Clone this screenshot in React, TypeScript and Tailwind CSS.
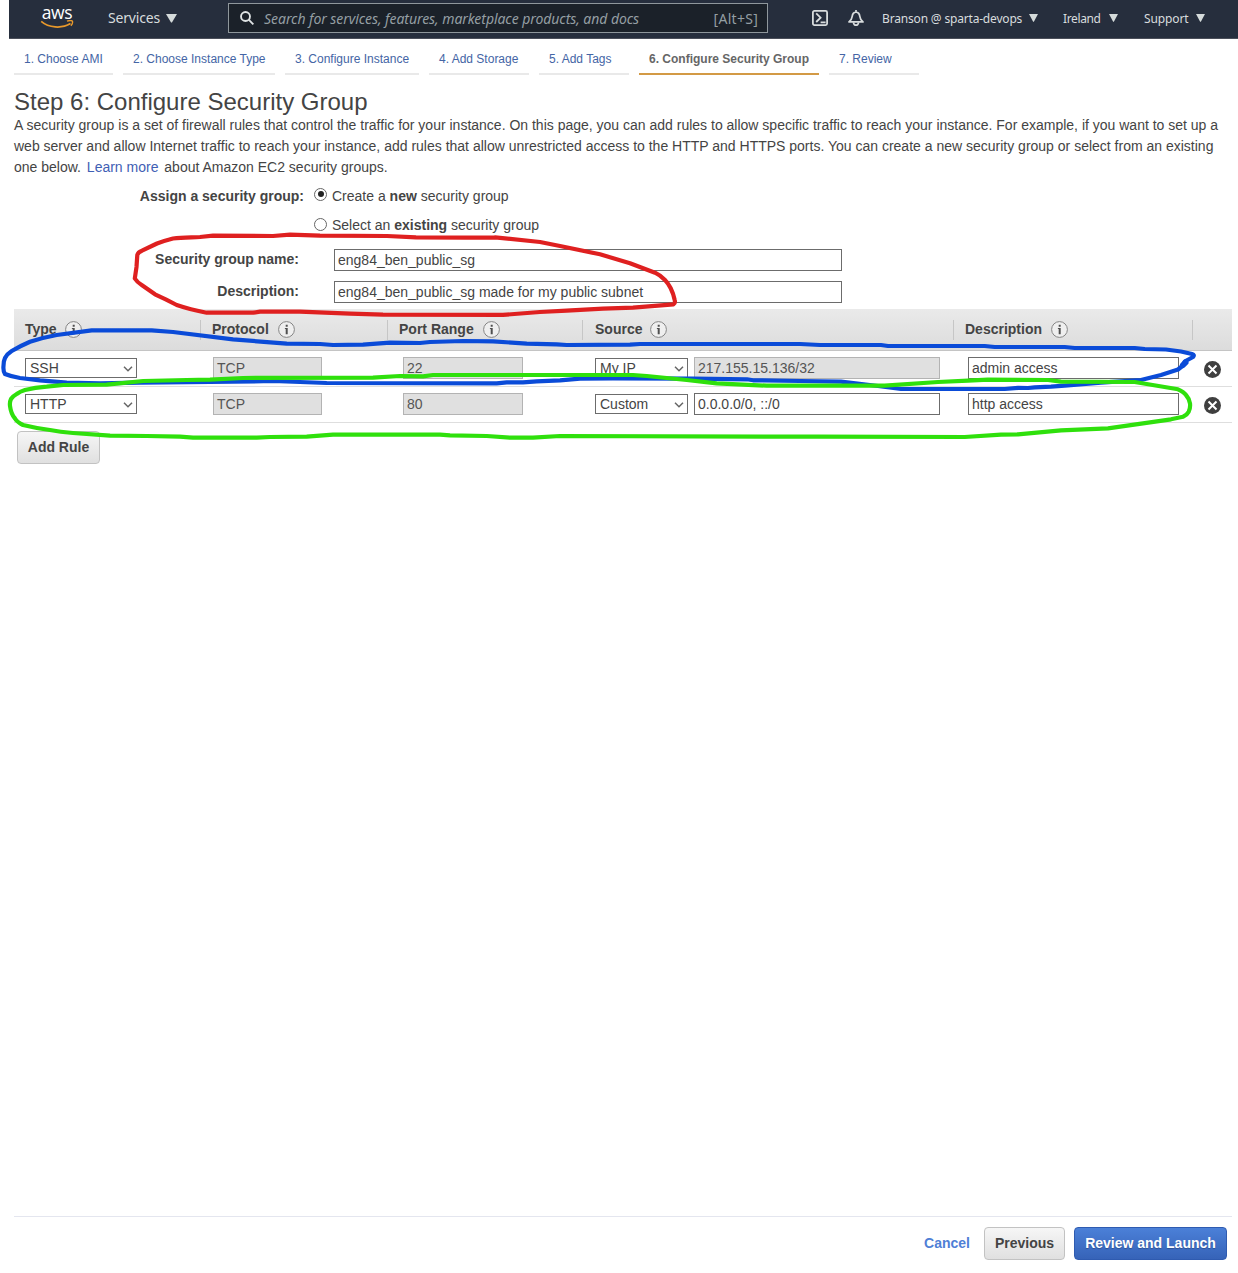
import React from "react";

const ARIAL = "font-['Liberation_Sans',Arial,sans-serif]";
const COLS = "grid grid-cols-[187px_187px_195px_371px_239px_39px]";

function Caret({ className }: { className: string }) {
  return (
    <svg viewBox="0 0 10 9" className={className} preserveAspectRatio="none" fill="#d5dbdb">
      <path d="M0 0h10L5.4 8.6h-.8z" />
    </svg>
  );
}

function TopBar() {
  return (
    <header className="ml-[9px] flex h-[39px] items-start border-b border-[#4b4f5a] bg-[#262e3d] font-['Noto_Sans',sans-serif] text-[#d8dcdd]">
      <div className="ml-[31px] flex h-[38px] w-[34px] flex-col items-center pt-[4px]">
        <span className="h-[16px] font-['Open_Sans',sans-serif] text-[17.5px] leading-[16px] font-medium tracking-[-0.4px] text-white">aws</span>
        <svg viewBox="0 0 34 9" className="h-[9px] w-[34px]" fill="none" stroke="#e8992b">
          <path d="M1.200 1.400C8.500 7.800 21.500 9 30.500 3.600" strokeWidth="1.700" />
          <path d="M27 1.200c2-.8 5-.8 5.400 0 .4 1-.2 3-1.500 4.600" strokeWidth="1.400" />
        </svg>
      </div>
      <span className="ml-[34px] h-[36px] text-[14px] leading-[36px] tracking-[-0.17px]">Services</span>
      <Caret className="mt-[14px] ml-[6px] h-[9px] w-[11px]" />
      <div className="mt-[3px] ml-[51px] flex h-[30px] w-[540px] items-center border border-[#8f979c] bg-[#1b2129] pr-[9px] pl-[11px] text-[14px] text-[#949ea3]">
        <svg viewBox="0 0 15 15" className="h-[14px] w-[14px]" fill="none" stroke="#dfe3e4" strokeWidth="2">
          <circle cx="5.900" cy="5.900" r="4.800" />
          <path d="M9.300 9.300l5 5" />
        </svg>
        <span className="ml-[10px] tracking-[-0.06px] italic">Search for services, features, marketplace products, and docs</span>
        <span className="ml-auto tracking-[0.28px]">[Alt+S]</span>
      </div>
      <svg viewBox="0 0 16 16" className="mt-[10px] ml-[44px] h-[16px] w-[16px]" fill="none" stroke="#d8dcdd" strokeWidth="1.800">
        <rect x="0.900" y="0.900" width="14.200" height="14.200" rx="1.500" />
        <path d="M4.200 3.400l4.400 4.300-4.400 4.300M8.600 12.300h5" />
      </svg>
      <svg viewBox="0 0 16 17" className="mt-[10px] ml-[20px] h-[17px] w-[16px]" fill="none" stroke="#d8dcdd" strokeWidth="1.700" strokeLinejoin="round">
        <path d="M8 0v2M8 1.800C5.400 2.400 4.400 4.200 4.200 6.400 4 8.800 3 10.200 1 11.900h14C13 10.200 12 8.800 11.800 6.400 11.600 4.200 10.600 2.400 8 1.800z" />
        <path d="M5.400 12.300c.3 1.900 1.300 2.900 2.600 2.900s2.300-1 2.600-2.900" />
      </svg>
      <span className="ml-[18px] w-[140px] text-[12px] leading-[37px] tracking-[-0.18px] whitespace-nowrap">Branson @ sparta-devops</span>
      <Caret className="mt-[14px] ml-[7px] h-[8px] w-[9px]" />
      <span className="ml-[25px] w-[38px] text-[12px] leading-[37px] tracking-[-0.38px]">Ireland</span>
      <Caret className="mt-[14px] ml-[8px] h-[8px] w-[9px]" />
      <span className="ml-[26px] w-[45px] text-[12px] leading-[37px] tracking-[-0.12px]">Support</span>
      <Caret className="mt-[14px] ml-[7px] h-[8px] w-[9px]" />
    </header>
  );
}

const steps = [
  { label: "1. Choose AMI", width: "w-[99px]" },
  { label: "2. Choose Instance Type", width: "w-[152px]" },
  { label: "3. Configure Instance", width: "w-[134px]" },
  { label: "4. Add Storage", width: "w-[100px]" },
  { label: "5. Add Tags", width: "w-[90px]" },
  { label: "6. Configure Security Group", width: "w-[180px]", active: true },
  { label: "7. Review", width: "w-[90px]" },
];

function Steps() {
  return (
    <nav className="flex gap-[10px] px-[14px] text-[12px]">
      {steps.map((s) => (
        <a
          key={s.label}
          className={`${s.width} h-[36px] border-b-2 pl-[10px] leading-[40px] whitespace-nowrap ${
            s.active ? "border-[#d39a45] font-bold text-[#666]" : "border-[#e9e9e9] text-[#4465a5]"
          }`}
        >
          {s.label}
        </a>
      ))}
    </nav>
  );
}

function Radio({ checked }: { checked?: boolean }) {
  return (
    <span className="mb-[3px] flex h-[13px] w-[13px] items-center justify-center rounded-full border border-[#666] bg-white">
      {checked && <span className="h-[6px] w-[6px] rounded-full bg-[#222]" />}
    </span>
  );
}

function Info({ className }: { className: string }) {
  return (
    <svg viewBox="0 0 17 17" className={`${className} h-[17px] w-[17px]`}>
      <circle cx="8.500" cy="8.500" r="7.900" fill="#efefef" stroke="#858585" />
      <path d="M7.700 3.800h2v1.900h-2zM6.900 7h2.800v6.300h-2V8.100h-.8z" fill="#505050" />
    </svg>
  );
}

function Field({ value, width, disabled }: { value: string; width: string; disabled?: boolean }) {
  return (
    <div
      className={`${width} h-[22px] border pl-[3px] leading-[20px] whitespace-nowrap ${
        disabled ? "border-[#b3b3b3] bg-[#e0e0e0] text-[#555]" : "border-[#6c6c6c] bg-white text-[#444]"
      }`}
    >
      {value}
    </div>
  );
}

function Select({ value, width }: { value: string; width: string }) {
  return (
    <div className={`${width} mt-px flex h-[20px] items-center justify-between border border-[#6c6c6c] bg-white pr-[3px] pl-[4px]`}>
      <span className="leading-[18px]">{value}</span>
      <svg viewBox="0 0 10 6" className="mt-[2px] h-[6px] w-[10px]" fill="none" stroke="#666" strokeWidth="1.500">
        <path d="M1 .8l4 4 4-4" />
      </svg>
    </div>
  );
}

const headers = [
  { label: "Type", pad: "pl-[11px]", gap: "ml-[8px]" },
  { label: "Protocol", pad: "pl-[11px]", gap: "ml-[9px]" },
  { label: "Port Range", pad: "pl-[11px]", gap: "ml-[9px]" },
  { label: "Source", pad: "pl-[12px]", gap: "ml-[8px]" },
  { label: "Description", pad: "pl-[11px]", gap: "ml-[9px]" },
];

const rules = [
  { type: "SSH", protocol: "TCP", port: "22", source: "My IP", cidr: "217.155.15.136/32", locked: true, note: "admin access" },
  { type: "HTTP", protocol: "TCP", port: "80", source: "Custom", cidr: "0.0.0.0/0, ::/0", locked: false, note: "http access" },
];

function RulesTable() {
  return (
    <div className="mr-[6px] ml-[14px]">
      <div className={`${COLS} h-[42px] items-center border-b border-[#c4c4c4] bg-linear-to-b from-[#eaeaea] to-[#dcdcdc]`}>
        {headers.map((h) => (
          <div key={h.label} className={`${h.pad} flex h-[20px] items-center border-r border-[#c6c6c6] font-bold text-[#444]`}>
            <span>{h.label}</span>
            <Info className={h.gap} />
          </div>
        ))}
      </div>
      {rules.map((r) => (
        <div key={r.type} className={`${COLS} h-[36px] border-b border-[#dedede] pt-[6px] text-[#444]`}>
          <div className="pl-[11px]">
            <Select value={r.type} width="w-[112px]" />
          </div>
          <div className="pl-[12px]">
            <Field value={r.protocol} width="w-[109px]" disabled />
          </div>
          <div className="pl-[15px]">
            <Field value={r.port} width="w-[120px]" disabled />
          </div>
          <div className="flex gap-[6px] pl-[12px]">
            <Select value={r.source} width="w-[93px]" />
            <Field value={r.cidr} width="w-[246px]" disabled={r.locked} />
          </div>
          <div className="pl-[14px]">
            <Field value={r.note} width="w-[211px]" />
          </div>
          <svg viewBox="0 0 17 17" className="mt-[4px] ml-[11px] h-[17px] w-[17px]">
            <circle cx="8.500" cy="8.500" r="8.500" fill="#3f3f3f" />
            <path d="M4.500 4.500l8 8M12.500 4.500l-8 8" stroke="#fff" strokeWidth="2" />
          </svg>
        </div>
      ))}
    </div>
  );
}

function Annotations() {
  return (
    <svg
      viewBox="0 0 1238 480"
      className="pointer-events-none absolute top-0 left-0 h-[480px] w-[1238px]"
      fill="none"
      strokeWidth="4.200"
      strokeLinejoin="round"
      strokeLinecap="round"
    >
      <path
        stroke="#df2020"
        d="M497 237.500L466 237.700 416 237.300 387 236 320 235.700 290 234.700 273 236 213 235.700 200 237C190 237.500 182 237.500 173 238.500Q165 240.500 157 243.500L142 250.700Q138 252 137.300 255L136.500 267 134.800 278.500Q137 282 141.700 285L155 294.300 165.700 299.300 176.700 305Q190 309.500 206.700 312.700L253 312.700 260 311.700 300 311.700 350 313.700 383 314.700 503 314.900 540 312 566.700 310.700 603 308.700 633 307.700 673.500 304.300Q675.500 303 674.700 300 673.500 294 670.700 288.300 668 283 665 280 660 275 655 272.700L630 263.300 600 254.300 560 246 540 242 495 237.300"
      />
      <path
        stroke="#0a4bd8"
        d="M3.500 366Q3.500 361 5 358 7 354 11.700 351 20 346 30 341.700 43 337.500 56.700 335L91.700 330.300 151.700 330.300 173 332 233 339.300 286.700 343.700 320 344 333 345 363 344.700 390 342.700 420 343 430 342 463 341 493 341.300 526.700 343.700 556.700 344.300 566.700 345 630 344.700 640 344 800 344 820 345 881 345 888 346 984.700 346 994.700 347 1064.700 347 1074.700 348 1134.700 348 1144.700 349 1166 349.500 1181 351.500 1192 354Q1195 355 1193 357L1184.700 361.500 1183 365.500 1178 369.500 1161 375 1141 380 1101 382.700 1064.700 385.700 1051 386.700 1034.700 387.300 1028 388 1018 387.900 1004.700 389 901 389 878 386 841 381.700 800 381 753 380.300 747 379.300 693 378.700 613 378.300 580 378.700 560 380.300 536.700 381.300 523 382.300 506.700 382.300 496.700 383.300 326.700 383 273 381 233 381.700 140 382.700 100 383.300 66.700 382.700 40 380.300 20 378Q11 376.500 5 374Q3 371 3.500 366"
      />
      <path
        stroke="#2fe00c"
        d="M10 406Q9.500 402 11 399 13 396 16.700 394 20 391.500 25 390 35 387.500 46.700 386.700L63.300 385 106.700 384.700 143.300 381 186.700 380 210 379.700 243 378 373 377.700 400 376 423 376.300 433 375 633 375 646.700 376 686.700 380 716.700 383.300 766.700 385.700 884.700 385.700 938 382 968 380.700 988 379.700 1048 380 1061 381.700 1134.700 382 1178 389.300Q1184 392 1186 395 1189.500 399 1190 403.500 1190.500 408 1188.700 411.700 1187 415 1183 416.700L1171 419.300 1108 428.300 1061 430.300 1018 434.300 1001 434.700 964.700 437 818 436.700 560 436 533 437.700 510 437.700 486.700 436 450 435.300 440 434.700 333 434.700 306.700 436.700 270 437 256.700 437.700 193 437.700 180 436.700 146.700 436 110 435.700 73 433Q60 432 50 430 35 428 23 425 17 422 15 418.500 11 414 10 406"
      />
      <path stroke="#0a4bd8" strokeWidth="6" d="M1183 365L1185.500 362.500" />
    </svg>
  );
}

export default function App() {
  return (
    <div className={`relative flex h-[1273px] w-[1238px] flex-col overflow-hidden bg-white text-[14px] text-[#444] ${ARIAL}`}>
      <TopBar />
      <Steps />
      <main className="flex flex-1 flex-col">
        <h1 className="mt-[13px] h-[27px] px-[14px] text-[24px] leading-[28px]">Step 6: Configure Security Group</h1>
        <p className="pr-[6px] pl-[14px] leading-[21px]">
          A security group is a set of firewall rules that control the traffic for your instance. On this page, you can add rules to allow
          specific traffic to reach your instance. For example, if you want to set up a web server and allow Internet traffic to reach your
          instance, add rules that allow unrestricted access to the HTTP and HTTPS ports. You can create a new security group or select from
          an existing one below. <a className="mx-[2px] text-[#3f60b4]">Learn more</a> about Amazon EC2 security groups.
        </p>
        <div className="mt-[4px] flex h-[29px] items-center">
          <span className="w-[304px] text-right font-bold">Assign a security group:</span>
          <span className="mb-[2px] ml-[10px]">
            <Radio checked />
          </span>
          <span className="ml-[5px]">
            Create a <b>new</b> security group
          </span>
        </div>
        <div className="flex h-[29px] items-center pl-[314px]">
          <Radio />
          <span className="ml-[5px]">
            Select an <b>existing</b> security group
          </span>
        </div>
        <div className="mt-[9px] flex">
          <span className="mr-[35px] w-[299px] text-right leading-[20px] font-bold">Security group name:</span>
          <Field value="eng84_ben_public_sg" width="w-[508px]" />
        </div>
        <div className="mt-[10px] mb-[6px] flex">
          <span className="mr-[35px] w-[299px] text-right leading-[20px] font-bold">Description:</span>
          <Field value="eng84_ben_public_sg made for my public subnet" width="w-[508px]" />
        </div>
        <RulesTable />
        <button className="mt-[8px] ml-[17px] h-[33px] w-[83px] rounded-[4px] border border-[#c2c2c2] bg-linear-to-b from-[#f6f6f6] to-[#e0e0e0] pb-px font-bold text-[#444]">
          Add Rule
        </button>
      </main>
      <footer className="mr-[6px] ml-[14px] flex h-[57px] items-start border-t border-[#e4e6ef] pt-[10px] pr-[5px] font-bold">
        <a className="mr-[14px] ml-auto leading-[33px] text-[#4f7fd6]">Cancel</a>
        <button className="mr-[9px] h-[33px] w-[81px] rounded-[4px] border border-[#c2c2c2] bg-linear-to-b from-[#f6f6f6] to-[#e0e0e0] text-[#444]">
          Previous
        </button>
        <button className="h-[33px] w-[153px] rounded-[4px] border border-[#2f5bb0] bg-linear-to-b from-[#4b80d8] to-[#3663b8] text-white [text-shadow:0_1px_1px_rgba(0,0,0,0.25)]">
          Review and Launch
        </button>
      </footer>
      <Annotations />
    </div>
  );
}
